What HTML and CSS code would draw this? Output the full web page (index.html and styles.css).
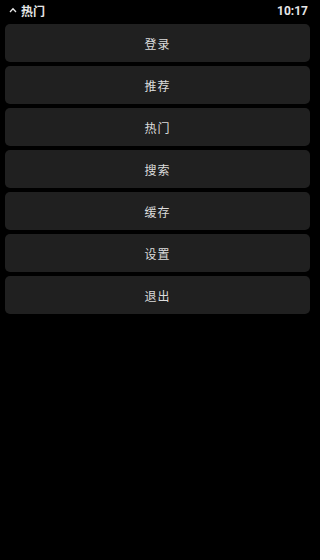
FILE: index.html
```html
<!DOCTYPE html>
<html lang="zh">
<head>
<meta charset="utf-8">
<link rel="stylesheet" href="styles.css">
</head>
<body>
<div class="status">
  <div class="title">
    <svg class="caret" width="8" height="6" viewBox="0 0 8 6"><path d="M1 5 L4 1.8 L7 5" fill="none" stroke="#e6e6e6" stroke-width="1.3"/></svg>
    <span>热门</span>
  </div>
  <span class="time">10:17</span>
</div>
<div class="menu">
  <div class="item">登录</div>
  <div class="item">推荐</div>
  <div class="item">热门</div>
  <div class="item">搜索</div>
  <div class="item">缓存</div>
  <div class="item">设置</div>
  <div class="item">退出</div>
</div>
</body>
</html>
```
FILE: styles.css
```css
html, body {
  margin: 0;
  padding: 0;
  background: #000;
  width: 315px;
  height: 560px;
  font-family: "Noto Sans CJK SC", "Noto Sans", sans-serif;
  color: #e6e6e6;
}
.status {
  height: 24px;
  display: flex;
  align-items: center;
  justify-content: space-between;
  padding: 0 7px 0 9px;
  box-sizing: border-box;
}
.title {
  display: flex;
  align-items: center;
  gap: 4px;
  font-size: 12px;
  font-weight: bold;
  line-height: 24px;
  margin-top: -2px;
}
.caret {
  margin-top: -2px;
}
.time {
  font-family: Roboto, "Noto Sans", sans-serif;
  font-size: 12px;
  font-weight: bold;
  margin-top: -2px;
}
.menu {
  display: flex;
  flex-direction: column;
  gap: 4px;
  padding: 0 5px;
}
.item {
  height: 38px;
  background: #202020;
  border-radius: 5px;
  display: flex;
  align-items: center;
  justify-content: center;
  font-size: 12px;
  letter-spacing: 1px;
  color: #dcdcdc;
}
```
